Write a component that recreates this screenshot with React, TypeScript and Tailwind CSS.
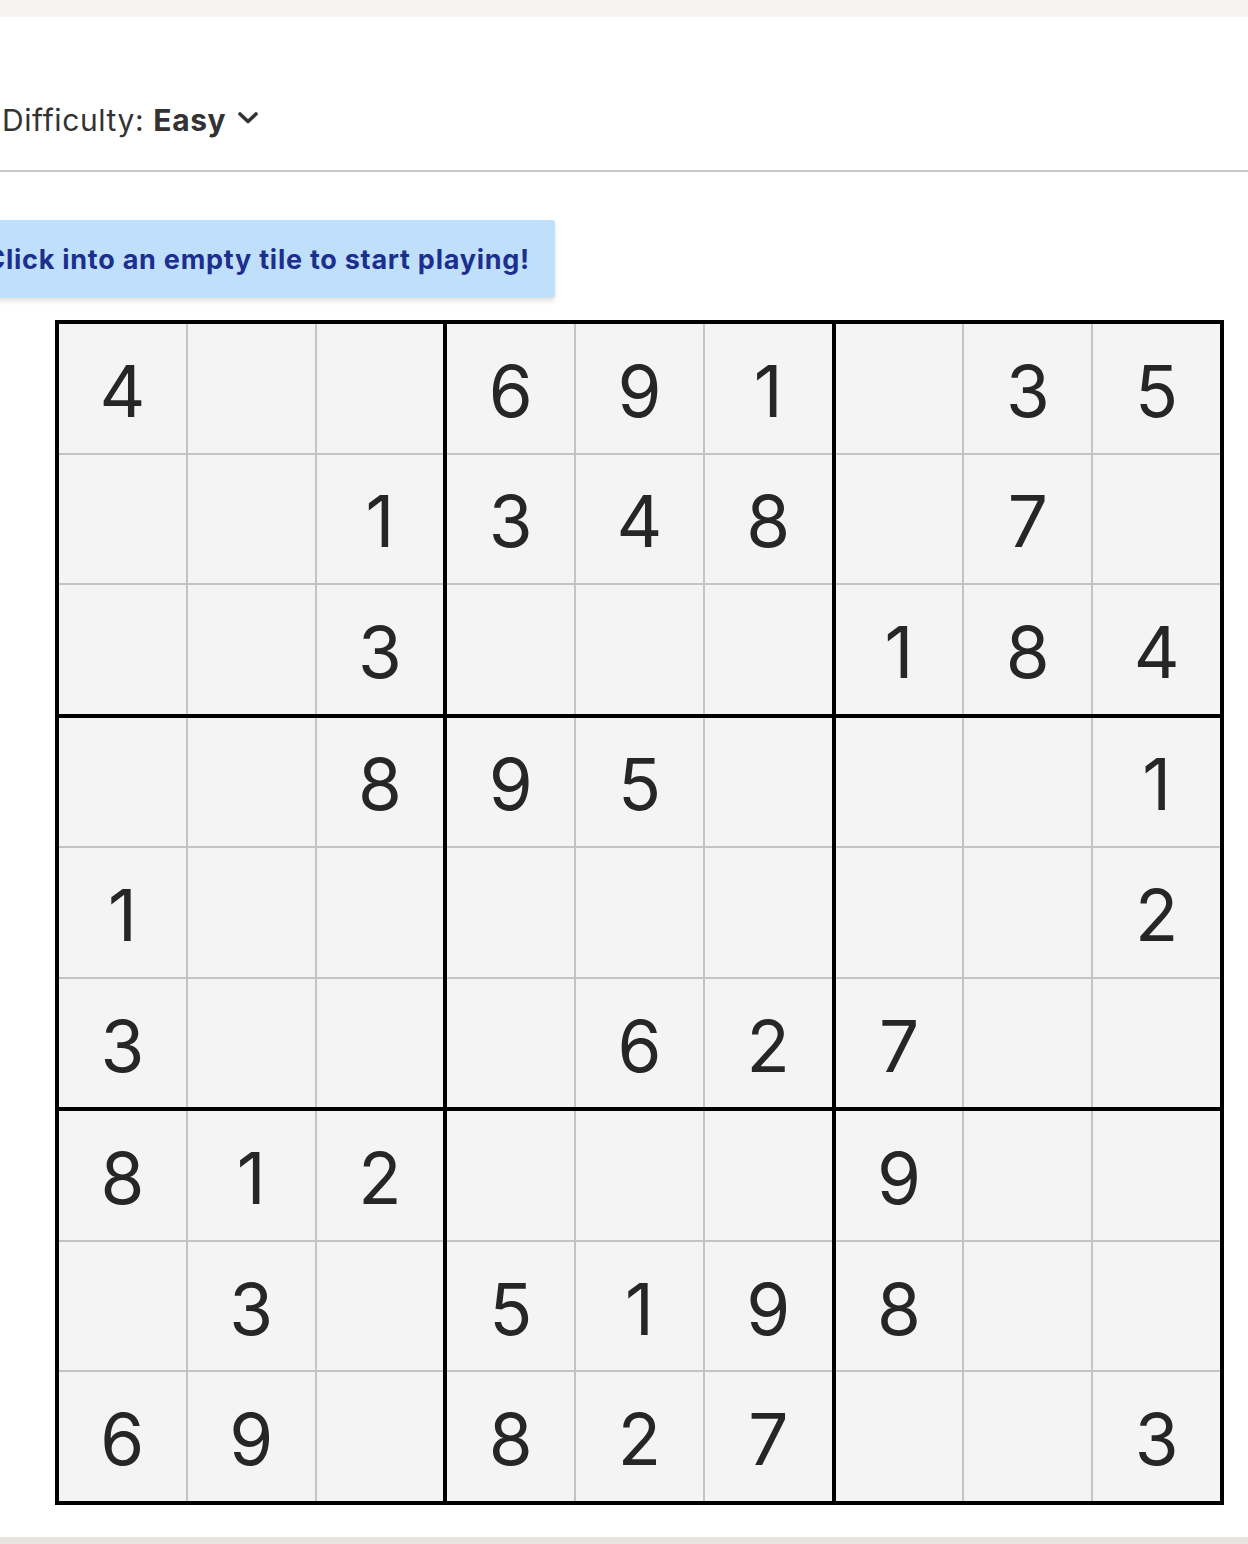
const PUZZLE: (number | null)[][] = [
  [4, null, null, 6, 9, 1, null, 3, 5],
  [null, null, 1, 3, 4, 8, null, 7, null],
  [null, null, 3, null, null, null, 1, 8, 4],
  [null, null, 8, 9, 5, null, null, null, 1],
  [1, null, null, null, null, null, null, null, 2],
  [3, null, null, null, 6, 2, 7, null, null],
  [8, 1, 2, null, null, null, 9, null, null],
  [null, 3, null, 5, 1, 9, 8, null, null],
  [6, 9, null, 8, 2, 7, null, null, 3],
];

// box b, cell c -> value in the 9x9 puzzle
function cellAt(b: number, c: number) {
  const r = Math.floor(b / 3) * 3 + Math.floor(c / 3);
  const col = (b % 3) * 3 + (c % 3);
  return PUZZLE[r][col];
}

export default function App() {
  return (
    <div className="w-[1248px] h-[1544px] bg-white flex flex-col overflow-hidden font-['Inter',sans-serif] text-[#2b2b2b]">
      <div className="h-[17px] bg-[#f6f4f1]" />

      {/* Toolbar */}
      <div className="h-[153px] flex items-end pb-[35px] pl-[2px]">
        <button className="flex items-center gap-[12px] text-[30px] leading-none tracking-[0.6px] text-[#333]">
          <span>
            Difficulty: <span className="font-bold">Easy</span>
          </span>
          <svg width="20" height="12" viewBox="0 0 20 12" className="mt-[-4px]">
            <polyline points="2,2 10,9.5 18,2" fill="none" stroke="#333" strokeWidth="3.6" strokeLinecap="round" strokeLinejoin="round" />
          </svg>
        </button>
      </div>
      <div className="h-[2px] bg-[#c8c8c8]" />

      {/* Hint banner */}
      <div className="mt-[48px] -ml-[60px] w-[615px] h-[78px] rounded-[4px] bg-[#c0dffb] shadow-[0_3px_5px_rgba(120,80,70,0.18)] flex items-center justify-end pr-[25px] pt-[3px]">
        <span className="font-bold text-[27px] tracking-[0.75px] text-[#1c2f8d] whitespace-nowrap">
          Click into an empty tile to start playing!
        </span>
      </div>

      {/* Board */}
      <div className="mt-[22px] ml-[55px] w-[1169px] h-[1185px] bg-black p-[4px] grid grid-cols-3 grid-rows-3 gap-[4px]">
        {[...Array(9)].map((_, b) => (
          <div key={b} className="grid grid-cols-3 grid-rows-3 gap-[2px] bg-[#c4c4c4]">
            {[...Array(9)].map((_, c) => {
              const v = cellAt(b, c);
              return (
                <div
                  key={c}
                  className="bg-[#f4f4f4] flex items-center justify-center text-[71px] leading-none text-[#262626] pt-[6px]"
                >
                  {v ?? ""}
                </div>
              );
            })}
          </div>
        ))}
      </div>

      <div className="flex-1" />
      <div className="h-[7px] bg-[#e8e3df]" />
    </div>
  );
}
